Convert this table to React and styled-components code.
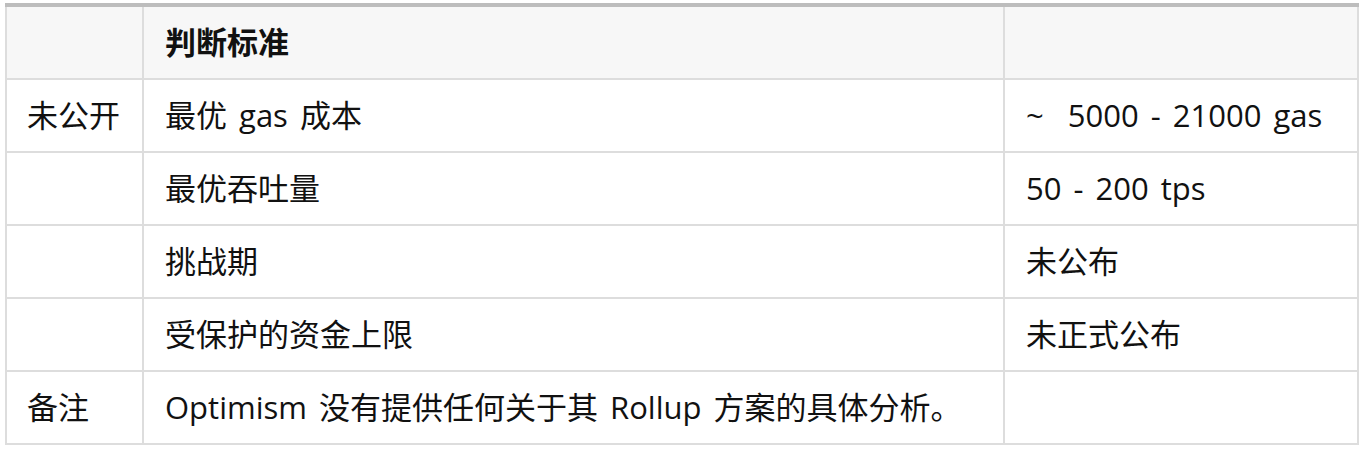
import React from "react";
import styled, { createGlobalStyle } from "styled-components";

const Global = createGlobalStyle`
  html, body {
    margin: 0;
    padding: 0;
    background: #ffffff;
  }
  body {
    font-family: "Open Sans", "Noto Sans CJK SC", sans-serif;
    color: #111111;
  }
`;

const Page = styled.div`
  padding: 3px 0 0 5px;
`;

const Table = styled.table`
  border-collapse: separate;
  border-spacing: 0;
  border-top: 4px solid #bdbdbd;
  font-size: 31px;
  line-height: 1;
  word-spacing: 4px;
`;

const Cell = styled.td`
  box-sizing: border-box;
  height: 73px;
  width: ${(p) => p.$w}px;
  padding: 0 20px;
  vertical-align: middle;
  text-align: left;
  white-space: nowrap;
  border-bottom: 2px solid #dddddd;
  border-right: 2px solid #dddddd;
  border-left: ${(p) => (p.$first ? "2px solid #dddddd" : "none")};
  background: ${(p) => (p.$head ? "#f7f7f7" : "#ffffff")};
  font-weight: ${(p) => (p.$head ? 700 : 400)};
  padding-left: ${(p) => p.$pl ?? 20}px;
`;

const widths = [139, 861, 354];

const rows = [
  ["未公开", "最优 gas 成本", "~\u00a0 5000 - 21000 gas"],
  ["", "最优吞吐量", "50 - 200 tps"],
  ["", "挑战期", "未公布"],
  ["", "受保护的资金上限", "未正式公布"],
  ["备注", "Optimism 没有提供任何关于其 Rollup 方案的具体分析。", ""],
];

export default function App() {
  return (
    <>
      <Global />
      <Page>
        <Table>
          <thead>
            <tr>
              <Cell as="th" $head $first $w={widths[0]} $pl={20}></Cell>
              <Cell as="th" $head $w={widths[1]} $pl={21}>判断标准</Cell>
              <Cell as="th" $head $w={widths[2]} $pl={21}></Cell>
            </tr>
          </thead>
          <tbody>
            {rows.map((r, i) => (
              <tr key={i}>
                <Cell $first $w={widths[0]} $pl={20}>{r[0]}</Cell>
                <Cell $w={widths[1]} $pl={21}>{r[1]}</Cell>
                <Cell $w={widths[2]} $pl={21}>{r[2]}</Cell>
              </tr>
            ))}
          </tbody>
        </Table>
      </Page>
    </>
  );
}
